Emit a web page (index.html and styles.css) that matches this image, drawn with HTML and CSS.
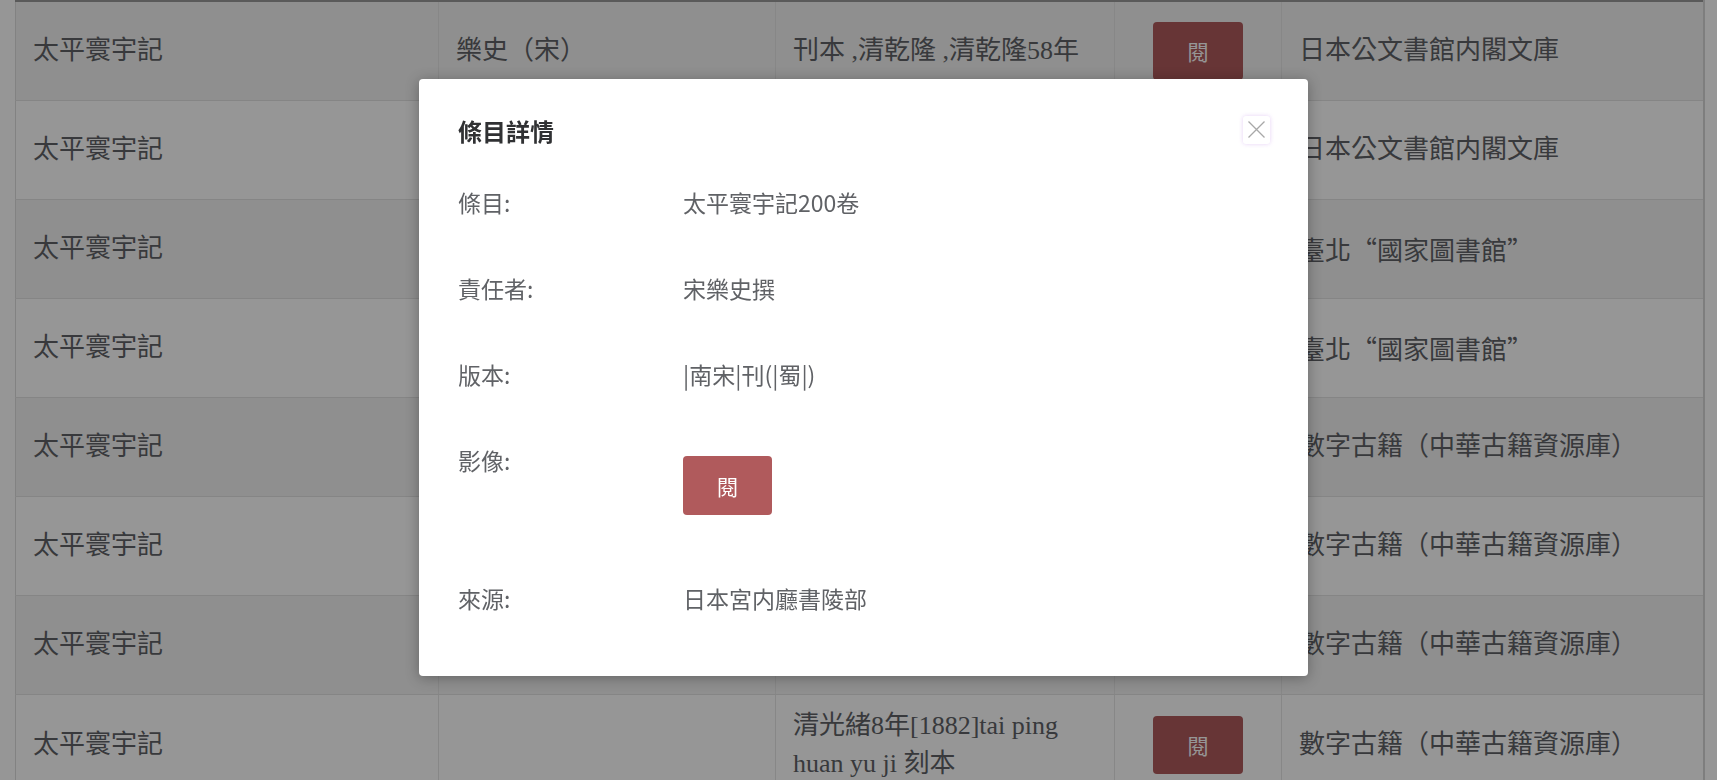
FILE: index.html
```html
<!DOCTYPE html>
<html lang="zh-Hant">
<head>
    <meta charset="UTF-8">
    <meta name="viewport" content="width=device-width, initial-scale=1.0">
    <title>太平寰宇記 - 條目</title>
    <link rel="stylesheet" href="styles.css">
</head>
<body>

    <!-- Result table -->
    <div class="page">
        <table class="book-table">
            <colgroup>
                <col class="col-title">
                <col class="col-author">
                <col class="col-edition">
                <col class="col-image">
                <col class="col-source">
            </colgroup>
            <tbody>
                <tr>
                    <td>太平寰宇記</td>
                    <td>樂史（宋）</td>
                    <td>刊本 ,清乾隆 ,清乾隆58年</td>
                    <td class="cell-btn"><button class="read-btn">閱</button></td>
                    <td>日本公文書館内閣文庫</td>
                </tr>
                <tr>
                    <td>太平寰宇記</td>
                    <td></td>
                    <td></td>
                    <td class="cell-btn"><button class="read-btn">閱</button></td>
                    <td>日本公文書館内閣文庫</td>
                </tr>
                <tr>
                    <td>太平寰宇記</td>
                    <td></td>
                    <td></td>
                    <td class="cell-btn"><button class="read-btn">閱</button></td>
                    <td class="cjk">臺北“國家圖書館”</td>
                </tr>
                <tr>
                    <td>太平寰宇記</td>
                    <td></td>
                    <td></td>
                    <td class="cell-btn"><button class="read-btn">閱</button></td>
                    <td class="cjk">臺北“國家圖書館”</td>
                </tr>
                <tr>
                    <td>太平寰宇記</td>
                    <td></td>
                    <td></td>
                    <td class="cell-btn"><button class="read-btn">閱</button></td>
                    <td>數字古籍（中華古籍資源庫）</td>
                </tr>
                <tr>
                    <td>太平寰宇記</td>
                    <td></td>
                    <td></td>
                    <td class="cell-btn"><button class="read-btn">閱</button></td>
                    <td>數字古籍（中華古籍資源庫）</td>
                </tr>
                <tr>
                    <td>太平寰宇記</td>
                    <td></td>
                    <td></td>
                    <td class="cell-btn"><button class="read-btn">閱</button></td>
                    <td>數字古籍（中華古籍資源庫）</td>
                </tr>
                <tr>
                    <td>太平寰宇記</td>
                    <td></td>
                    <td>清光緒8年[1882]tai ping huan yu ji 刻本</td>
                    <td class="cell-btn"><button class="read-btn">閱</button></td>
                    <td>數字古籍（中華古籍資源庫）</td>
                </tr>
            </tbody>
        </table>
    </div>

    <!-- Dark mask over the page -->
    <div class="mask"></div>

    <!-- Detail dialog -->
    <div class="dialog-wrap">
        <div class="dialog">
            <div class="dialog-header">
                <span class="dialog-title">條目詳情</span>
                <button class="dialog-close" aria-label="關閉">
                    <svg width="19" height="19" viewBox="0 0 19 19">
                        <path d="M1.5 1.5 L17.5 17.5 M17.5 1.5 L1.5 17.5" stroke="#a8a8a8" stroke-width="1.3" fill="none"/>
                    </svg>
                </button>
            </div>

            <div class="dialog-body">
                <div class="detail-row">
                    <span class="detail-label">條目:</span>
                    <span class="detail-value">太平寰宇記200卷</span>
                </div>
                <div class="detail-row">
                    <span class="detail-label">責任者:</span>
                    <span class="detail-value">宋樂史撰</span>
                </div>
                <div class="detail-row">
                    <span class="detail-label">版本:</span>
                    <span class="detail-value">|南宋|刊(|蜀|)</span>
                </div>
                <div class="detail-row">
                    <span class="detail-label">影像:</span>
                    <span class="detail-value"><button class="read-btn dialog-btn">閱</button></span>
                </div>
                <div class="detail-row">
                    <span class="detail-label">來源:</span>
                    <span class="detail-value">日本宮内廳書陵部</span>
                </div>
            </div>
        </div>
    </div>

</body>
</html>
```

FILE: styles.css
```css
/* Reset */
body {
    margin: 0;
    padding: 0;
    background-color: #fff;
    color: #606266;
    font-family: "Liberation Serif", "Noto Sans CJK TC", serif;
}

/* Table area */
.page {
    padding: 0 14px 0 15px;
}

.book-table {
    width: 1688px;
    table-layout: fixed;
    border-collapse: collapse;
    border-top: 2px solid #9a9a9a;
    border-left: 1px solid #dedede;
    border-right: 2px solid #d6d6d6;
    font-size: 26px;
}

.col-title { width: 423px; }
.col-author { width: 337px; }
.col-edition { width: 339px; }
.col-image { width: 167px; }
.col-source { width: 422px; }

.book-table tr {
    height: 99px;
}

.book-table tr:nth-child(odd) {
    background-color: #f3f3f3;
}

.book-table td {
    padding: 12px 17px;
    line-height: 38px;
    vertical-align: middle;
    border-bottom: 1px solid #e2e2e2;
    border-right: 1px solid #e6e6e6;
    word-wrap: break-word;
}

/* full-width quotes */
.book-table td.cjk {
    font-family: "Noto Sans CJK TC", sans-serif;
}

.book-table td.cell-btn {
    text-align: center;
    padding: 0;
}

.read-btn {
    width: 90px;
    height: 58px;
    border: none;
    border-radius: 4px;
    background-color: #b05a5c;
    color: #fff;
    font-family: "Noto Sans CJK TC", sans-serif;
    font-size: 21px;
    cursor: pointer;
    vertical-align: middle;
}

/* Mask */
.mask {
    position: fixed;
    top: 0;
    left: 0;
    right: 0;
    bottom: 0;
    background-color: rgba(0, 0, 0, 0.41);
}

/* Dialog */
.dialog-wrap {
    position: fixed;
    top: 0;
    left: 0;
    right: 0;
    bottom: 0;
    display: flex;
    align-items: flex-start;
    padding: 79px 0 0 419px;
}

.dialog {
    width: 889px;
    box-sizing: border-box;
    padding: 37px 38px 63px 39px;
    background-color: #fff;
    border-radius: 4px;
    box-shadow: 0 2px 14px rgba(0, 0, 0, 0.3);
    font-family: "Noto Sans CJK TC", sans-serif;
}

.dialog-header {
    display: flex;
    justify-content: space-between;
    align-items: center;
    height: 30px;
}

.dialog-title {
    font-size: 24px;
    font-weight: bold;
    line-height: 30px;
    color: #303133;
}

.dialog-close {
    width: 27px;
    height: 28px;
    margin-top: -3px;
    padding: 0;
    border: none;
    border-radius: 3px;
    background-color: #fff;
    box-shadow: 0 0 4px rgba(200, 150, 235, 0.45);
    display: flex;
    align-items: center;
    justify-content: center;
    cursor: pointer;
}

.dialog-body {
    margin-top: 41px;
}

.detail-row {
    display: flex;
    font-size: 23px;
    line-height: 30px;
    margin-bottom: 56px;
}

.detail-row:last-child {
    margin-bottom: 0;
}

.detail-label {
    width: 225px;
    flex-shrink: 0;
}

.dialog-btn {
    width: 89px;
    height: 59px;
    margin: 11px 0 12px;
    display: block;
}
```
